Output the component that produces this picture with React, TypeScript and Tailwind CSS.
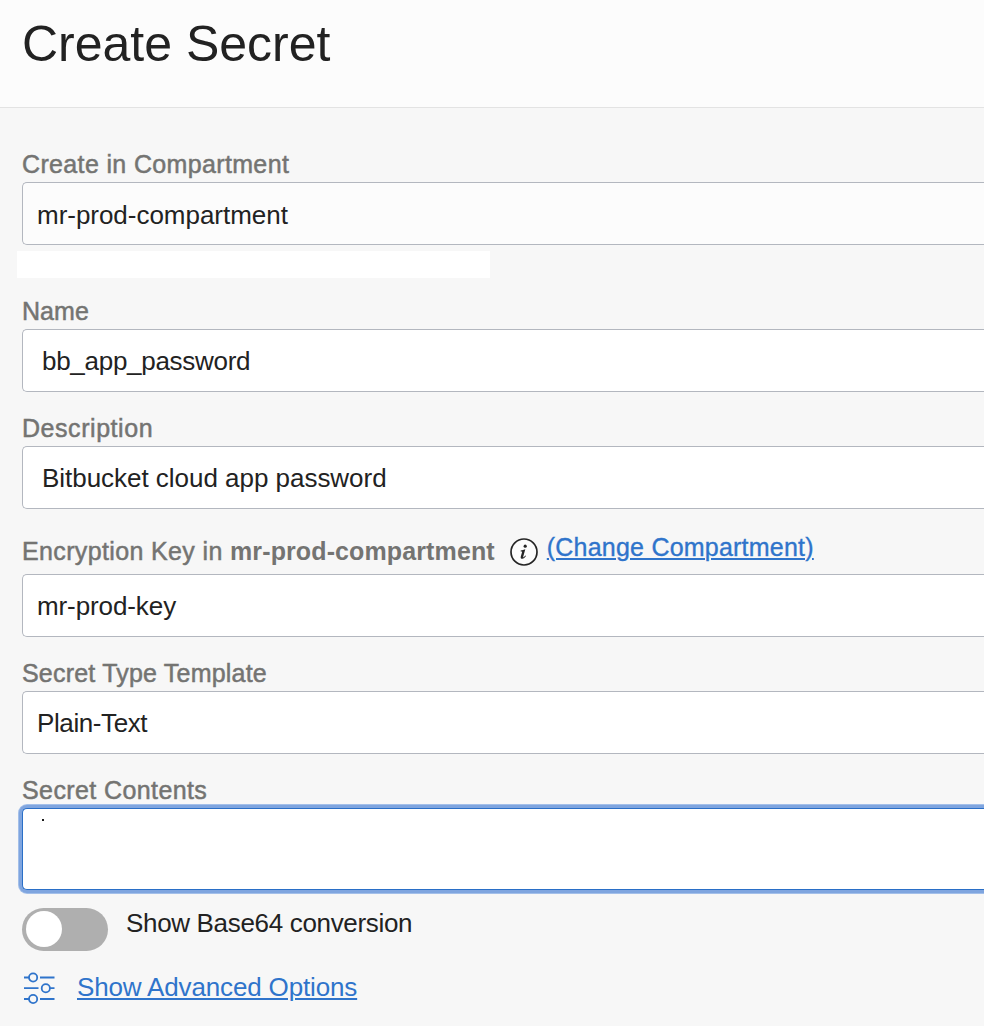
import type { ReactNode } from "react";

const labelText =
  "relative -top-[2px] block h-8 text-[25px] leading-8 whitespace-nowrap text-[#747472] [-webkit-text-stroke:0.5px_#747472]";

function Field({
  label,
  value,
  className = "",
  boxClassName,
}: {
  label: ReactNode;
  value: string;
  className?: string;
  boxClassName: string;
}) {
  return (
    <div className={className}>
      {label}
      <div
        className={`flex h-[63px] items-center rounded-l-[5px] border border-r-0 border-[#b3b7bf] text-[26px] leading-8 whitespace-nowrap ${boxClassName}`}
      >
        {value}
      </div>
    </div>
  );
}

function InfoIcon() {
  return (
    <svg width="28" height="28" viewBox="0 0 28 28" className="mt-[13px] ml-[15px] shrink-0">
      <circle cx="14" cy="14" r="13" fill="#fcfcfc" stroke="#252525" strokeWidth="1.7" />
      <circle cx="15.2" cy="8.2" r="1.6" fill="#252525" />
      <path
        d="M10.7 12.6c1.6-.3 3-.8 4.6-1.3l-2.1 7.4c-.2.8.3.8.8.3l1.4-1.5.6.5c-1.1 1.6-2.4 2.8-3.7 2.8-1.4 0-1.9-.9-1.5-2.3l1.3-4.4c.1-.6-.1-.7-.6-.7h-.8Z"
        fill="#252525"
      />
    </svg>
  );
}

function SlidersIcon() {
  return (
    <svg
      width="34"
      height="34"
      viewBox="0 0 34 34"
      fill="none"
      stroke="#2f74cb"
      strokeWidth="1.8"
      className="shrink-0"
    >
      <path d="M2 6.5h5M18 6.5h14.5M2 17.2h14.5M28 17.2h4.5M2 28h5M18 28h14.5" />
      <circle cx="11.1" cy="6.5" r="4.1" />
      <circle cx="23.8" cy="17.2" r="4.1" />
      <circle cx="11.1" cy="28" r="4.1" />
    </svg>
  );
}

export default function App() {
  return (
    <div className="h-[1026px] w-full overflow-hidden bg-[#f7f7f7] font-['Liberation_Sans',Arial,sans-serif] text-[#222222]">
      <header className="h-[108px] border-b border-[#e3e3e3] bg-[#fcfcfc] pt-[14px] pl-[22px]">
        <h1 className="text-[50px] leading-[60px]">Create Secret</h1>
      </header>

      <main className="pt-[42px] pl-[22px]">
        <Field
          label={<label className={`${labelText} tracking-[0.35px]`}>Create in Compartment</label>}
          value="mr-prod-compartment"
          boxClassName="bg-[#fcfcfc] pt-[3px] pl-[14px] tracking-[-0.03px]"
        />
        <div className="mt-[6px] -ml-[5px] h-[27px] w-[473px] bg-white" />

        <Field
          className="mt-[19px]"
          label={<label className={`${labelText} tracking-[0.05px]`}>Name</label>}
          value="bb_app_password"
          boxClassName="bg-white pt-px pl-[19px] tracking-[-0.28px]"
        />
        <Field
          className="mt-[22px]"
          label={<label className={`${labelText} tracking-[0.55px]`}>Description</label>}
          value="Bitbucket cloud app password"
          boxClassName="bg-white pt-px pl-[19px] tracking-[-0.03px]"
        />
        <Field
          className="mt-[16px]"
          label={
            <div className="flex h-[49px]">
              <label className={`${labelText} mt-[12px] tracking-[0.36px]`}>
                Encryption Key in{" "}
                <b className="tracking-[0.12px] [-webkit-text-stroke:0px]">mr-prod-compartment</b>
              </label>
              <InfoIcon />
              <a className="mt-[6px] ml-[9px] h-8 text-[25px] leading-8 tracking-[0.22px] whitespace-nowrap text-[#2f74cb] underline decoration-2 underline-offset-[2px] [-webkit-text-stroke:0.35px_#2f74cb]">
                (Change Compartment)
              </a>
            </div>
          }
          value="mr-prod-key"
          boxClassName="bg-white pt-px pl-[14px] tracking-[-0.1px]"
        />
        <Field
          className="mt-[22px]"
          label={<label className={`${labelText} tracking-[0.2px]`}>Secret Type Template</label>}
          value="Plain-Text"
          boxClassName="bg-white pt-px pl-[14px] tracking-[-0.4px]"
        />

        <div className="mt-[22px]">
          <label className={`${labelText} tracking-[0.4px]`}>Secret Contents</label>
          <div className="h-[82px] rounded-l-[5px] border border-r-0 border-[#2a6fc7] bg-white pt-[10px] pl-[19px] shadow-[0_0_0_3px_#7fa5df,0_0_0_4px_#a3bfe9]">
            <div className="size-[2px] bg-[#1a1a1a]" />
          </div>
        </div>

        <div className="mt-[18px] flex">
          <div className="flex h-[43px] w-[86px] items-center rounded-full bg-[#afafaf] pb-px pl-1">
            <div className="size-9 rounded-full bg-white" />
          </div>
          <span className="-mt-px ml-[18px] text-[26px] leading-8 tracking-[-0.33px] whitespace-nowrap">
            Show Base64 conversion
          </span>
        </div>

        <div className="mt-[20px] flex">
          <SlidersIcon />
          <a className="ml-[21px] text-[26px] leading-8 tracking-[-0.15px] whitespace-nowrap text-[#2f74cb] underline decoration-2 underline-offset-[2px]">
            Show Advanced Options
          </a>
        </div>
      </main>
    </div>
  );
}
